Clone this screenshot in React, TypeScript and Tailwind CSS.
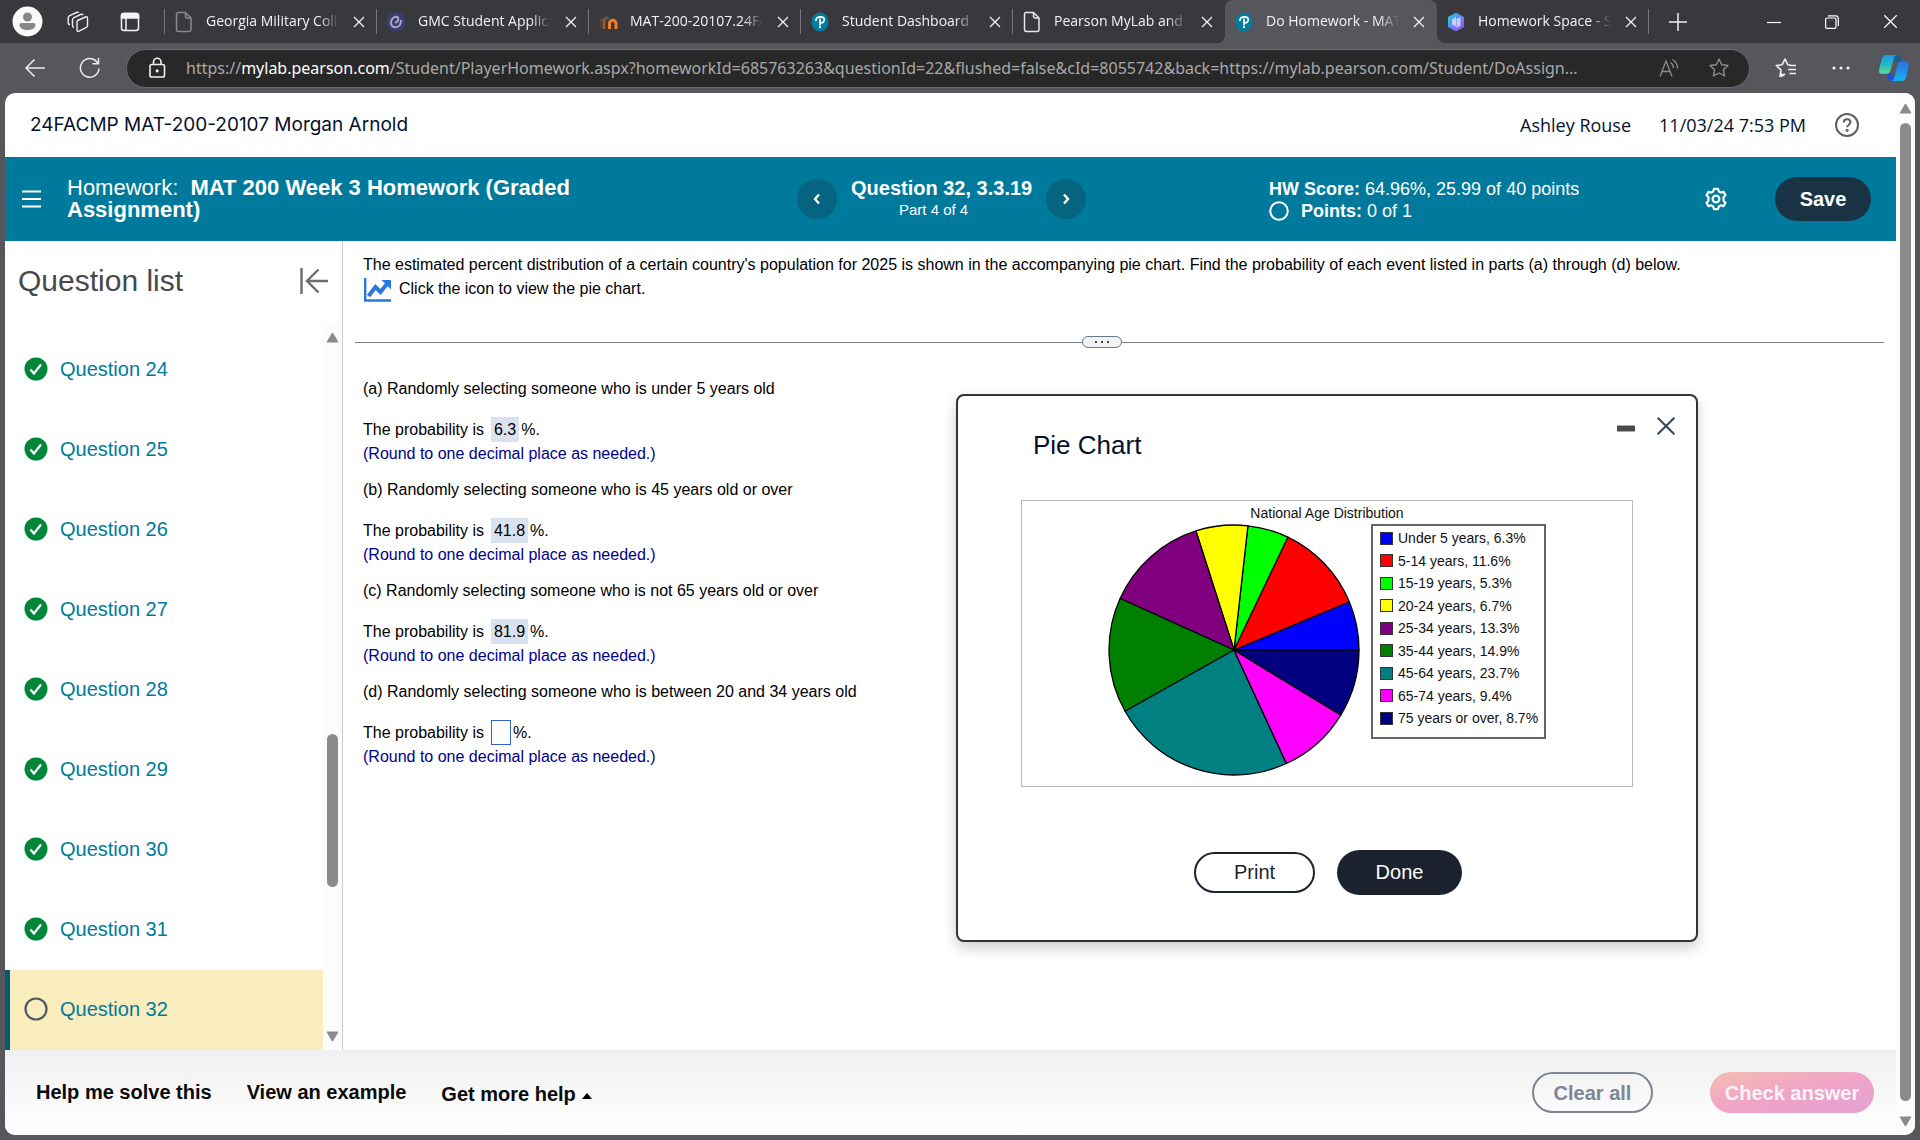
import React from "react";

const CHROME_FONT = "font-['Open_Sans','Noto_Sans',sans-serif]";

type Slice = { label: string; value: number; color: string };

const slices: Slice[] = [
  { label: "Under 5 years, 6.3%", value: 6.3, color: "#0000ff" },
  { label: "5-14 years, 11.6%", value: 11.6, color: "#ff0000" },
  { label: "15-19 years, 5.3%", value: 5.3, color: "#00ff00" },
  { label: "20-24 years, 6.7%", value: 6.7, color: "#ffff00" },
  { label: "25-34 years, 13.3%", value: 13.3, color: "#800080" },
  { label: "35-44 years, 14.9%", value: 14.9, color: "#008000" },
  { label: "45-64 years, 23.7%", value: 23.7, color: "#008080" },
  { label: "65-74 years, 9.4%", value: 9.4, color: "#ff00ff" },
  { label: "75 years or over, 8.7%", value: 8.7, color: "#000080" },
];

/* ---------- icons ---------- */

const CloseIcon = ({ size = 12, color = "#f0f0f0", width = 1.3 }: { size?: number; color?: string; width?: number }) => (
  <svg width={size} height={size} viewBox="0 0 12 12" stroke={color} strokeWidth={width} fill="none">
    <path d="M1 1 11 11M11 1 1 11" />
  </svg>
);

const PageIcon = ({ color }: { color: string }) => (
  <svg width="18" height="22" viewBox="0 0 18 22" fill="none" stroke={color} strokeWidth="1.5">
    <path d="M3 1.500h7.500l5.500 5.500v11.500a2 2 0 0 1-2 2H3.500a2 2 0 0 1-2-2V3a1.500 1.500 0 0 1 1.500-1.500zM10.500 1.500V5.500a1.500 1.500 0 0 0 1.500 1.500h4" />
  </svg>
);

const EllucianIcon = () => (
  <svg width="20" height="20" viewBox="0 0 20 20" fill="none">
    <circle cx="10" cy="10" r="9.500" fill="#3c3c78" />
    <path d="M9 10.500c3 .2 4.500-4.500 2-5.500C8 4 5 7.500 5 10.500c0 3 2 4.800 4.700 4.800 3.300 0 5.500-3 5.300-7.300" stroke="#a9a9b4" strokeWidth="2" />
  </svg>
);

const MoodleIcon = () => (
  <svg width="20" height="20" viewBox="0 0 20 20" fill="none">
    <path d="M1 8 9 4l3 2-5 3z" fill="#5a5652" />
    <path d="M2.500 9v6" stroke="#5a4a40" strokeWidth="1.500" />
    <path d="M6 8v9" stroke="#a85a20" strokeWidth="2.600" />
    <path d="M11.500 17v-5.500a3.200 3.200 0 0 1 6.500 0V17" stroke="#f08020" strokeWidth="3" />
  </svg>
);

const PearsonIcon = () => (
  <svg width="18" height="20" viewBox="0 0 18 20" fill="none">
    <ellipse cx="9" cy="10" rx="8.700" ry="9.600" fill="#047a9c" />
    <path d="M5 8.500C5 6 7 4.800 9.500 4.800c2.300 0 3.800 1 3.800 2.900 0 2.200-2 3.500-4.500 3.300M9 7v5.800" stroke="#fff" strokeWidth="1.700" strokeLinecap="round" />
    <circle cx="9" cy="15.200" r="1.100" fill="#fff" />
  </svg>
);

const GemIcon = () => (
  <svg width="18" height="20" viewBox="0 0 18 20">
    <defs>
      <linearGradient id="gem" x1="0" y1="0" x2="1" y2="1">
        <stop offset="0" stopColor="#20d8d0" />
        <stop offset=".45" stopColor="#5a8cf5" />
        <stop offset="1" stopColor="#b04af0" />
      </linearGradient>
    </defs>
    <path d="M9 .8 17 5v10L9 19.200 1 15V5z" fill="url(#gem)" />
    <path d="m5 8 4-3.500v10l-4-2zM9.500 7l4-2v8.500l-4 2.500z" fill="#e8e4ff" opacity=".75" />
  </svg>
);

const CheckBadge = () => (
  <svg width="24" height="24" viewBox="0 0 24 24" fill="none">
    <circle cx="12" cy="12" r="11.500" fill="#008638" />
    <path d="m6.500 12.500 3.500 4L17 7.500" stroke="#fff" strokeWidth="2.300" />
  </svg>
);

const OpenCircle = ({ color, size, stroke }: { color: string; size: number; stroke: number }) => (
  <svg width={size} height={size} viewBox="0 0 24 24" fill="none">
    <circle cx="12" cy="12" r="10.500" stroke={color} strokeWidth={stroke} />
  </svg>
);

const Triangle = ({ down = false }: { down?: boolean }) => (
  <svg width="13" height="11" viewBox="0 0 13 11" fill="#8b8b8b">
    <path d={down ? "M1.500.5h10q1.200 0 .6 1L7.300 9.700q-.8 1-1.600 0L.9 1.500q-.6-1 .6-1z" : "M1.500 10.500h10q1.200 0 .6-1L7.300 1.300q-.8-1-1.600 0L.9 9.500q-.6 1 .6 1z"} />
  </svg>
);

const CopilotIcon = () => (
  <svg width="32" height="30" viewBox="0 0 32 30">
    <defs>
      <linearGradient id="cpA" x1="0" y1="0" x2="0" y2="1">
        <stop offset="0" stopColor="#1b9ce4" />
        <stop offset=".5" stopColor="#22b8c8" />
        <stop offset="1" stopColor="#5fdc8c" />
      </linearGradient>
      <linearGradient id="cpB" x1="0" y1="0" x2="0" y2="1">
        <stop offset="0" stopColor="#2d6fe8" />
        <stop offset="1" stopColor="#14b4f4" />
      </linearGradient>
    </defs>
    <path d="M14 2h5c2.500 0 3.200 1.500 4 4l.7 2.500h-5z" fill="#0f5f9c" />
    <path d="M8 20.500h6l3 7.500h-3.500c-2 0-3-1.200-3.700-3.500z" fill="#1f50e0" />
    <path d="M8.500 2H19c-2 0-2.800 2-3.500 4.500l-3 11c-.6 2-1.500 3.200-3.500 3.200H4c-3 0-3.400-2.200-2.700-5L4 5.500C4.700 3.200 6 2 8.500 2z" fill="url(#cpA)" />
    <path d="M23 8.500h4.500c3 0 3.700 2.200 3 5L28 24.500c-.7 2.300-2 3.500-4.500 3.500H13c2 0 2.800-1.500 3.500-4l3-12c.6-2 1.500-3.500 3.500-3.500z" fill="url(#cpB)" />
  </svg>
);

/* ---------- browser frame ---------- */

type TabInfo = { title: string; icon: React.ReactNode; active?: boolean };

const tabs: TabInfo[] = [
  { title: "Georgia Military College", icon: <PageIcon color="#8a8a8a" /> },
  { title: "GMC Student Application", icon: <EllucianIcon /> },
  { title: "MAT-200-20107.24FACMP", icon: <MoodleIcon /> },
  { title: "Student Dashboard", icon: <PearsonIcon /> },
  { title: "Pearson MyLab and Mastering", icon: <PageIcon color="#e8e8e8" /> },
  { title: "Do Homework - MAT 200 Week 3", icon: <PearsonIcon />, active: true },
  { title: "Homework Space - StudyX", icon: <GemIcon /> },
];

function Tab({ title, icon, active }: TabInfo) {
  return (
    <div
      role="tab"
      aria-selected={!!active}
      className={
        active
          ? "relative flex h-full max-w-[212px] min-w-0 flex-1 items-center rounded-t-lg bg-[#56575c] pr-[10px] pl-[9px]"
          : "relative flex h-full max-w-[212px] min-w-0 flex-1 items-center pr-[10px] pl-[9px]"
      }
    >
      <span className="flex w-5 shrink-0 justify-center">{icon}</span>
      <span className="ml-3 min-w-0 flex-1 overflow-hidden pb-[2px] text-sm whitespace-nowrap text-[#f2f2f2] [mask-image:linear-gradient(to_right,black_85%,transparent)]">
        {title}
      </span>
      <button aria-label={`Close ${title}`} className="ml-3 flex w-4 shrink-0 justify-center">
        <CloseIcon />
      </button>
      {active ? (
        <>
          <span className="absolute bottom-0 -left-2 h-2 w-2 bg-[radial-gradient(circle_at_0_0,transparent_8px,#56575c_8px)]" />
          <span className="absolute -right-2 bottom-0 h-2 w-2 bg-[radial-gradient(circle_at_100%_0,transparent_8px,#56575c_8px)]" />
        </>
      ) : (
        title !== "Pearson MyLab and Mastering" && <span className="absolute top-[9px] right-0 h-[25px] w-px bg-[#77777a]" />
      )}
    </div>
  );
}

function TabStrip() {
  return (
    <div className="flex h-[43px] shrink-0 items-center bg-[#39393d]">
      <button aria-label="Profile" className="ml-3 shrink-0">
        <svg width="31" height="31" viewBox="0 0 31 31">
          <circle cx="15.500" cy="15.500" r="15" fill="#fafafa" />
          <circle cx="15.500" cy="11" r="4.500" fill="#8b8785" />
          <path d="M9.500 17h12a2 2 0 0 1 2 2c0 3-3.500 5-8 5s-8-2-8-5a2 2 0 0 1 2-2z" fill="#8b8785" />
        </svg>
      </button>
      <button aria-label="Workspaces" className="ml-6 shrink-0">
        <svg width="22" height="22" viewBox="0 0 22 22" fill="none" stroke="#ececec" strokeWidth="1.400" strokeLinejoin="round">
          <path d="m10.500 9.500 8-3.500q2-.7 2 1.200v7.300q0 1.500-1.500 2.200l-7 3.500q-2 .8-2-1.200v-8q0-1 .5-1.500zM7 16.500q-1.500-.3-1.500-2V9q0-1.500 1.500-2.300l6.500-3.200q2-.8 2.500.7M3 13.500Q1.200 13.500 1.200 12V7q0-1.500 1.500-2.300L9.500 1.500q1.500-.7 2.200.2" />
        </svg>
      </button>
      <button aria-label="Tab actions" className="ml-[31px] shrink-0">
        <svg width="20" height="20" viewBox="0 0 20 20" fill="none" stroke="#f5f5f5" strokeWidth="1.500">
          <rect x="1.500" y="1.500" width="17" height="17" rx="2.500" />
          <path d="M1.500 3.500q0-2 2-2h13q2 0 2 2V6h-17z" fill="#f5f5f5" />
          <path d="M6 6v12" />
        </svg>
      </button>
      <span className="ml-6 h-[25px] w-px shrink-0 bg-[#77777a]" />
      <div role="tablist" className={"flex h-full min-w-0 flex-1 " + CHROME_FONT}>
        {tabs.map((t) => (
          <Tab key={t.title} {...t} />
        ))}
        <button aria-label="New tab" className="ml-5 shrink-0">
          <svg width="18" height="18" viewBox="0 0 18 18" stroke="#f0f0f0" strokeWidth="1.500">
            <path d="M9 0v18M0 9h18" />
          </svg>
        </button>
      </div>
      <div className="flex shrink-0 items-center gap-11 pr-[22px]">
        <button aria-label="Minimize">
          <svg width="14" height="14" viewBox="0 0 14 14" stroke="#fff" strokeWidth="1.200">
            <path d="M0 7.500h14" />
          </svg>
        </button>
        <button aria-label="Restore">
          <svg width="14" height="14" viewBox="0 0 14 14" fill="none" stroke="#fff" strokeWidth="1.200">
            <rect x=".6" y="3" width="10.400" height="10.400" rx="1.500" />
            <path d="M3 .8h7.500q2.800 0 2.800 2.800V11" />
          </svg>
        </button>
        <button aria-label="Close window">
          <CloseIcon size={15} width={1} color="#fff" />
        </button>
      </div>
    </div>
  );
}

function Toolbar() {
  return (
    <div className="flex h-[50px] shrink-0 items-center bg-[#56575c]">
      <button aria-label="Back" className="ml-6 shrink-0">
        <svg width="22" height="20" viewBox="0 0 22 20" fill="none" stroke="#ececec" strokeWidth="1.500">
          <path d="M21 10H2M10.500 1.500 2 10l8.500 8.500" />
        </svg>
      </button>
      <button aria-label="Refresh" className="ml-[33px] shrink-0">
        <svg width="22" height="22" viewBox="0 0 22 22" fill="none" stroke="#ececec" strokeWidth="1.500">
          <path d="M20 11.500A9.300 9.300 0 1 1 17.500 4.500L19 6.500M19.500 1v5.800h-6" />
        </svg>
      </button>
      <div className="ml-[25px] flex h-[39px] min-w-0 flex-1 items-center rounded-full border border-[#6b6b6e] bg-[#282828] pr-5 pl-5">
        <svg width="20" height="22" viewBox="0 0 20 22" fill="none" stroke="#f0f0f0" strokeWidth="1.600" className="shrink-0">
          <rect x="3" y="7.500" width="14.500" height="12.500" rx="1.800" />
          <path d="M6.500 7.500V5a3.700 3.700 0 0 1 7.500 0v2.500" />
          <circle cx="10.200" cy="13.800" r=".8" fill="#f0f0f0" />
        </svg>
        <div className="ml-[19px] min-w-0 flex-1 truncate font-['Noto_Sans',sans-serif] text-base text-[#a9a9a9]">
          https://<span className="text-white">mylab.pearson.com</span>
          /Student/PlayerHomework.aspx?homeworkId=685763263&amp;questionId=22&amp;flushed=false&amp;cId=8055742&amp;back=https://mylab.pearson.com/Student/DoAssign...
        </div>
        <button aria-label="Read aloud" className="ml-4 shrink-0">
          <svg width="20" height="20" viewBox="0 0 20 20" fill="none" stroke="#8d8d8d" strokeWidth="1.300">
            <path d="M1 18.500 7 3l6 15.500M3 13.500h8M11.500 4.500q3 2 3 5.500M13.500 1.500q5 3 5 9" />
          </svg>
        </button>
        <button aria-label="Add to favorites" className="ml-[30px] shrink-0">
          <svg width="20" height="20" viewBox="0 0 20 20" fill="none" stroke="#8d8d8d" strokeWidth="1.400" strokeLinejoin="round">
            <path d="m10 1 2.700 5.700 6.300.8-4.600 4.300 1.200 6.200L10 15l-5.600 3 1.200-6.200L1 7.500l6.300-.8z" />
          </svg>
        </button>
      </div>
      <div className="flex shrink-0 items-center pr-[10px]">
        <button aria-label="Favorites" className="ml-[25px]">
          <svg width="22" height="20" viewBox="0 0 22 20" fill="none" stroke="#f0f0f0" strokeWidth="1.600" strokeLinejoin="round">
            <path d="M7.500 15.500 5 18.500l1-6.500L1.200 7.500l6-.8L10 1l2.700 5.700 2.800.3M6 18.500l4-2.500M14.500 7.500H21M13 11.500h8M14.500 15.500H21" />
          </svg>
        </button>
        <button aria-label="Settings and more" className="ml-[35px]">
          <svg width="18" height="4" viewBox="0 0 18 4" fill="#f0f0f0">
            <circle cx="2" cy="2" r="1.600" />
            <circle cx="9" cy="2" r="1.600" />
            <circle cx="16" cy="2" r="1.600" />
          </svg>
        </button>
        <button aria-label="Copilot" className="ml-7">
          <CopilotIcon />
        </button>
      </div>
    </div>
  );
}

/* ---------- page ---------- */

function CourseHeader() {
  return (
    <header className="flex h-16 shrink-0 items-center pr-9 pl-[25px] text-[#05112a]">
      <h1 className="font-['Inter',sans-serif] text-[19px]">24FACMP MAT-200-20107 Morgan Arnold</h1>
      <div className="ml-auto flex items-center font-['Open_Sans',sans-serif] text-lg">
        <span>Ashley Rouse</span>
        <span className="ml-7">11/03/24 7:53 PM</span>
        <button aria-label="Help" className="ml-7">
          <svg width="26" height="26" viewBox="0 0 26 26" fill="none" stroke="#5e6060" strokeWidth="2">
            <circle cx="13" cy="13" r="11" />
            <path d="M9.700 10.500c0-2 1.400-3.200 3.400-3.200s3.400 1.200 3.400 3c0 2.300-3.400 2.500-3.400 5" />
            <circle cx="13.100" cy="18.300" r=".6" />
          </svg>
        </button>
      </div>
    </header>
  );
}

const NavButton = ({ label, d }: { label: string; d: string }) => (
  <button aria-label={label} className="flex size-10 shrink-0 items-center justify-center rounded-full bg-[#05647f]">
    <svg width="10" height="12" viewBox="0 0 10 12" fill="none" stroke="#fff" strokeWidth="2.400">
      <path d={d} />
    </svg>
  </button>
);

function AssignmentBar() {
  return (
    <div className="grid h-[84px] shrink-0 grid-cols-[792fr_472fr_627fr] items-center bg-[#007a9c] text-white">
      <div className="flex items-center pl-[17px]">
        <button aria-label="Menu" className="shrink-0">
          <svg width="19" height="18" viewBox="0 0 19 18" stroke="#fff" strokeWidth="2">
            <path d="M0 1.500h19M0 9h19M0 16.500h19" />
          </svg>
        </button>
        <h2 className="ml-[26px] max-w-[560px] text-[22px] leading-[22px]">
          Homework:&nbsp; <b>MAT 200 Week 3 Homework (Graded Assignment)</b>
        </h2>
      </div>
      <div className="flex items-center">
        <NavButton label="Previous question" d="M7 1.500 3 6l4 4.500" />
        <div className="mx-[14px] pb-[2px] text-center">
          <div className="text-xl leading-6 font-bold whitespace-nowrap">Question 32, 3.3.19</div>
          <div className="pr-4 text-[15px] leading-5">Part 4 of 4</div>
        </div>
        <NavButton label="Next question" d="m3 1.500 4 4.500-4 4.500" />
      </div>
      <div className="flex items-center">
        <div className="pt-[2px] text-lg leading-[22px] whitespace-nowrap">
          <div>
            <b>HW Score:</b> 64.96%, 25.99 of 40 points
          </div>
          <div className="flex items-center">
            <OpenCircle color="#fff" size={20} stroke={2.4} />
            <span className="ml-3">
              <b>Points:</b> 0 of 1
            </span>
          </div>
        </div>
        <button aria-label="Settings" className="ml-auto shrink-0">
          <svg width="24" height="24" viewBox="0 0 24 24" fill="none" stroke="#fff" strokeWidth="2.200" strokeLinejoin="round">
            <path d="M10 1.800h4l.8 2.700 1.900 1.100 2.800-.7 2 3.400-2 2v3.400l2 2-2 3.400-2.800-.7-1.900 1.100-.8 2.700h-4l-.8-2.700-1.900-1.100-2.800.7-2-3.400 2-2v-3.400l-2-2 2-3.400 2.800.7 1.900-1.100z" />
            <circle cx="12" cy="12" r="3.400" />
          </svg>
        </button>
        <button className="mr-[25px] ml-[47px] h-11 w-24 shrink-0 rounded-full bg-[#1a3344] text-xl font-bold">Save</button>
      </div>
    </div>
  );
}

function Sidebar() {
  const questions = [24, 25, 26, 27, 28, 29, 30, 31, 32];
  return (
    <aside className="flex w-[338px] shrink-0 flex-col border-r border-[#c7c9d2]">
      <div className="flex h-[81px] shrink-0 items-center justify-between pr-[14px] pb-[2px] pl-[13px]">
        <h3 className="text-[30px] text-[#47494b]">Question list</h3>
        <button aria-label="Collapse question list">
          <svg width="28" height="26" viewBox="0 0 28 26" fill="none" stroke="#6a7070" strokeWidth="2.400">
            <path d="M1.500 0v26M28 13H7M18.500 1.500 7 13l11.500 11.500" />
          </svg>
        </button>
      </div>
      <div className="flex min-h-0 flex-1">
        <ul className="flex flex-1 flex-col justify-end">
          {questions.map((n) => {
            const current = n === 32;
            return (
              <li
                key={n}
                className={
                  current
                    ? "flex h-20 shrink-0 items-center border-l-[5px] border-[#005d78] bg-[#f9ecbd] pb-[2px] pl-[14px]"
                    : "flex h-20 shrink-0 items-center pb-[2px] pl-[19px]"
                }
              >
                {current ? <OpenCircle color="#4f5a60" size={24} stroke={2.2} /> : <CheckBadge />}
                <a href="#" className="ml-3 text-xl text-[#007a9c]">
                  Question {n}
                </a>
              </li>
            );
          })}
        </ul>
        <div className="flex w-[19px] flex-col items-center bg-[#fcfcfc] pt-[10px] pb-2">
          <Triangle />
          <div className="flex-[392]" />
          <div className="w-[11px] flex-[153] rounded-full bg-[#8b8b8b]" />
          <div className="flex-[144]" />
          <Triangle down />
        </div>
      </div>
    </aside>
  );
}

const parts = [
  { id: "a", text: "(a) Randomly selecting someone who is under 5 years old", answer: "6.3" },
  { id: "b", text: "(b) Randomly selecting someone who is 45 years old or over", answer: "41.8" },
  { id: "c", text: "(c) Randomly selecting someone who is not 65 years old or over", answer: "81.9" },
  { id: "d", text: "(d) Randomly selecting someone who is between 20 and 34 years old", answer: "" },
];

function QuestionBody() {
  return (
    <div className="text-base leading-6 text-black">
      <div className="pt-3 pl-5">
        <p>
          The estimated percent distribution of a certain country's population for 2025 is shown in the accompanying pie chart. Find the
          probability of each event listed in parts (a) through (d) below.
        </p>
        <div className="flex h-6 items-center">
          <button aria-label="View the pie chart" className="mt-[2px] ml-px">
            <svg width="28" height="24" viewBox="0 0 28 24" fill="none" stroke="#2878dc">
              <path d="M1.200 0v22.500H27" strokeWidth="2.400" />
              <path d="m4.500 18 7-9 5 5L23 6" strokeWidth="4" />
              <path d="M17.500 2H27v9.500z" fill="#2878dc" stroke="none" />
            </svg>
          </button>
          <span className="ml-[7px]">Click the icon to view the pie chart.</span>
        </div>
      </div>
      <div className="mt-[35px] mr-3 ml-3 flex h-3 items-center">
        <span className="h-px flex-[728] bg-[#7a8594]" />
        <button aria-label="Resize panels" className="flex h-3 w-10 items-center justify-center gap-1 rounded-full border border-[#6a7a8a] bg-[#f0f2f5]">
          <i className="size-[2px] bg-[#444]" />
          <i className="size-[2px] bg-[#444]" />
          <i className="size-[2px] bg-[#444]" />
        </button>
        <span className="h-px flex-[764] bg-[#7a8594]" />
      </div>
      <div className="flex flex-col gap-3 pt-[29px] pl-5">
        {parts.map((p) => (
          <section key={p.id}>
            <p>{p.text}</p>
            <div className="mt-4 flex h-[25px] items-center">
              <label htmlFor={`answer-${p.id}`}>The probability is</label>
              {p.answer ? (
                <output id={`answer-${p.id}`} className="ml-[7px] flex h-[25px] items-center bg-[#d9e2f1] px-[3px]">
                  {p.answer}
                </output>
              ) : (
                <input id={`answer-${p.id}`} type="text" className="ml-[7px] h-[25px] w-5 border border-[#2f66c4] bg-white" />
              )}
              <span className="ml-[2px]">%.</span>
            </div>
            <p className="text-[#00008b]">(Round to one decimal place as needed.)</p>
          </section>
        ))}
      </div>
    </div>
  );
}

function Pie() {
  const R = 125;
  const C = 126;
  const total = slices.reduce((s, x) => s + x.value, 0);
  let acc = 0;
  const point = (v: number) => {
    const a = (v / total) * Math.PI * 2;
    return `${(C + R * Math.cos(a)).toFixed(2)} ${(C - R * Math.sin(a)).toFixed(2)}`;
  };
  return (
    <svg width="252" height="252" viewBox="0 0 252 252" stroke="#000" strokeWidth="1.300" strokeLinejoin="round" role="img" aria-label="National Age Distribution">
      {slices.map((s) => {
        const from = point(acc);
        acc += s.value;
        return <path key={s.label} d={`M${C} ${C}L${from}A${R} ${R} 0 0 0 ${point(acc)}Z`} fill={s.color} />;
      })}
    </svg>
  );
}

function PieDialog() {
  return (
    <div
      role="dialog"
      aria-label="Pie Chart"
      className="absolute top-[153px] right-[198px] flex w-[742px] flex-col rounded-lg border-2 border-[#333] bg-white pb-[45px] shadow-[0_6px_14px_rgba(0,0,0,0.2)]"
    >
      <div className="flex justify-end gap-[21px] pt-5 pr-5">
        <button aria-label="Minimize dialog" className="flex h-5 items-center">
          <span className="mt-1 h-[7px] w-[18px] rounded-[1px] border-y border-[#aaa] bg-[#4a4a4a]" />
        </button>
        <button aria-label="Close dialog">
          <CloseIcon size={20} color="#3a4a5c" width={1.3} />
        </button>
      </div>
      <h4 className="mt-[-7px] pl-[75px] text-[26px] leading-8 text-[#05112a]">Pie Chart</h4>
      <div className="mx-[63px] mt-[39px] flex h-[287px] flex-col items-center border border-[#b9b9b9] text-sm text-[#111]">
        <div className="mt-[2px] leading-[21px]">National Age Distribution</div>
        <div className="flex">
          <Pie />
          <ul className="ml-[11px] flex h-[215px] w-[175px] flex-col justify-between border-2 border-[#666] pt-[2px] pb-[9px] pl-[7px]">
            {slices.map((s) => (
              <li key={s.label} className="flex items-center leading-5 whitespace-nowrap">
                <span className="mr-[5px] size-[13px] border border-[#333]" style={{ background: s.color }} />
                {s.label}
              </li>
            ))}
          </ul>
        </div>
      </div>
      <div className="mt-[63px] flex items-center justify-center gap-[22px] pl-[2px] text-xl">
        <button className="h-[41px] w-[121px] rounded-full border-2 border-[#1c232f] pb-[2px] text-[#1c232f]">Print</button>
        <button className="h-[45px] w-[125px] rounded-full bg-[#1c232f] pb-[2px] text-white">Done</button>
      </div>
    </div>
  );
}

function Footer() {
  return (
    <footer className="flex h-[85px] shrink-0 items-center bg-gradient-to-b from-[#f0f0f0] to-white pr-[22px] pl-[31px] text-xl font-bold text-[#0a0a0a]">
      <button className="pb-[2px]">Help me solve this</button>
      <button className="ml-[35px] pb-[2px]">View an example</button>
      <button className="ml-[35px] flex items-center pt-[2px]">
        Get more help
        <svg width="10" height="6" viewBox="0 0 10 6" className="mt-1 ml-[6px]">
          <path d="M0 6 5 0l5 6z" />
        </svg>
      </button>
      <button className="ml-auto h-[41px] w-[121px] rounded-full border-2 border-[#7d8694] text-[#7d8694]">Clear all</button>
      <button className="ml-[57px] h-[41px] w-[164px] rounded-full bg-gradient-to-br from-[#f3bcb0] via-[#f0a4c6] to-[#e2a0d2] text-[#fdf3f8]">
        Check answer
      </button>
    </footer>
  );
}

export default function App() {
  return (
    <div className="flex h-screen flex-col overflow-hidden bg-[#56575c] font-['Liberation_Sans',Arial,sans-serif]">
      <TabStrip />
      <Toolbar />
      <div className="mx-[5px] mb-[5px] flex min-h-0 flex-1 overflow-hidden rounded-[10px] bg-white">
        <div className="flex min-w-0 flex-1 flex-col">
          <CourseHeader />
          <AssignmentBar />
          <div className="flex min-h-0 flex-1">
            <Sidebar />
            <main className="relative min-w-0 flex-1">
              <QuestionBody />
              <PieDialog />
            </main>
          </div>
          <Footer />
        </div>
        <div className="flex w-[19px] shrink-0 flex-col items-center bg-[#fcfcfc] pt-[10px] pb-2">
          <Triangle />
          <div className="mt-[9px] mb-[15px] w-[11px] flex-1 rounded-full bg-[#8b8b8b]" />
          <Triangle down />
        </div>
      </div>
    </div>
  );
}
